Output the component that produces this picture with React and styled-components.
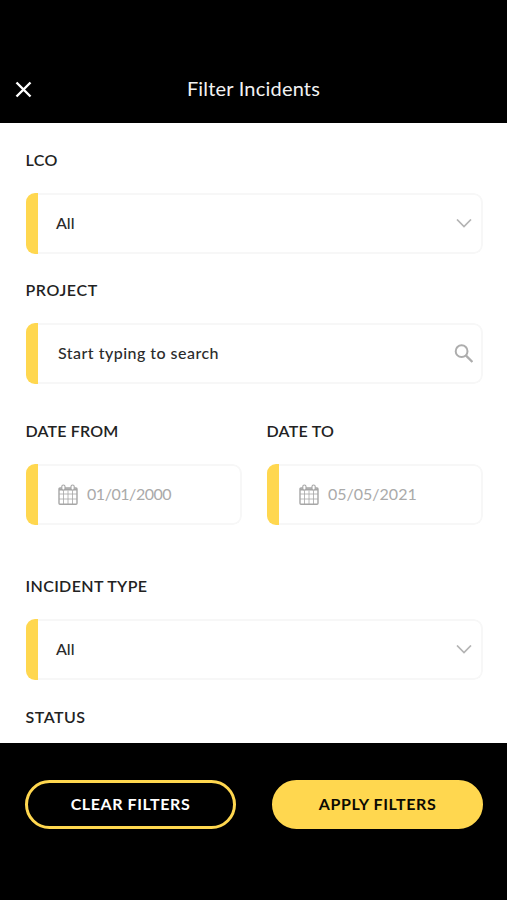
import React from "react"
import styled, { createGlobalStyle } from "styled-components"

const GlobalStyle = createGlobalStyle`
  * {
    box-sizing: border-box;
  }
  body {
    margin: 0;
    background: #000;
    font-family: Lato, "Liberation Sans", sans-serif;
  }
  button {
    font-family: inherit;
    cursor: pointer;
  }
`

const Screen = styled.div`
  display: flex;
  flex-direction: column;
  height: 900px;
  overflow: hidden;
  background: #000;
`

const Header = styled.header`
  display: grid;
  grid-template-columns: 48px 1fr 48px;
  align-items: center;
  height: 123px;
  padding-top: 53px;
  flex-shrink: 0;
  color: #fff;
`

const CloseButton = styled.button`
  display: flex;
  padding: 2px 0 0 15px;
  border: 0;
  background: none;
  color: #fff;
`

const Title = styled.h1`
  margin: 0;
  text-align: center;
  font-size: 20px;
  font-weight: 400;
  line-height: 24px;
  letter-spacing: 0.2px;
  color: #f2f2f2;
`

const Content = styled.main`
  flex: 1;
  min-height: 0;
  overflow: hidden;
  padding: 27px 24.5px 0 25.5px;
  background: #fff;
`

const Field = styled.div`
  margin-bottom: ${props => props.$gap || 0}px;
`

const Label = styled.label`
  display: block;
  height: 20px;
  margin-bottom: 23px;
  font-size: 16px;
  font-weight: 600;
  line-height: 20px;
  letter-spacing: ${props => props.$tracking || 0}px;
  white-space: nowrap;
  color: #222;
`

const Control = styled.div`
  display: flex;
  height: 61px;
  overflow: hidden;
  border-radius: 9px;
  background: #fff;
`

const Accent = styled.span`
  width: 12.5px;
  flex-shrink: 0;
  background: #ffd74f;
`

const ControlBody = styled.div`
  display: flex;
  flex: 1;
  align-items: center;
  padding-right: 8px;
  border: 2px solid #f7f7f7;
  border-left: 0;
  border-radius: 0 9px 9px 0;
`

const Value = styled.span`
  flex: 1;
  padding: 0 0 2px ${props => props.$indent}px;
  font-size: 16px;
  font-weight: 500;
  line-height: 20px;
  letter-spacing: ${props => props.$tracking || 0}px;
  color: #2b2b2b;
`

const DateValue = styled(Value)`
  font-weight: 400;
  color: #aaa;
`

const DateIcon = styled.span`
  display: flex;
  margin: 0 0 1px 20px;
`

const DateRow = styled.div`
  display: grid;
  grid-template-columns: 1fr 1fr;
  gap: 25px;
  margin-bottom: 51px;
`

const Footer = styled.footer`
  display: flex;
  justify-content: space-between;
  height: 157px;
  padding: 37px 24px 0 25px;
  flex-shrink: 0;
`

const Button = styled.button`
  width: 211px;
  height: 49px;
  padding: 0 0 2px;
  border: 3px solid #ffd74f;
  border-radius: 25px;
  background: ${props => (props.$primary ? "#ffd74f" : "transparent")};
  color: ${props => (props.$primary ? "#0c0a03" : "#fff")};
  font-size: 16px;
  font-weight: 700;
  line-height: 20px;
  letter-spacing: 0.6px;
`

function CloseIcon() {
  return (
    <svg width="17" height="17" viewBox="0 0 17 17" fill="none">
      <path d="M1.5 1.5 15.5 15.5M15.5 1.5 1.5 15.5" stroke="#fff" strokeWidth="2.4" />
    </svg>
  )
}

function ChevronIcon() {
  return (
    <svg width="17" height="10" viewBox="0 0 17 10" fill="none">
      <path d="M1 0.5 8 7.6 15 0.5" stroke="#b4b4b4" strokeWidth="1.7" />
    </svg>
  )
}

function SearchIcon() {
  return (
    <svg width="19" height="19" viewBox="0 0 19 19" fill="none" stroke="#adadad">
      <circle cx="7.6" cy="7.2" r="5.9" strokeWidth="2" />
      <path d="M11.8 11.4 18.4 18" strokeWidth="2.3" />
    </svg>
  )
}

function CalendarIcon() {
  return (
    <svg width="20" height="21" viewBox="0 0 20 21" fill="none" stroke="#a6a6a6">
      <rect x="1" y="4" width="18" height="16.2" rx="1" strokeWidth="1.4" />
      <path d="M1 5.4H19" strokeWidth="2" />
      <path d="M1 10H19M1 15H19M5.5 6.5V20M10 6.5V20M14.5 6.5V20" strokeWidth="0.8" />
      <rect x="3.8" y="1" width="3.2" height="5" rx="1.6" fill="#fff" strokeWidth="1.1" />
      <rect x="13" y="1" width="3.2" height="5" rx="1.6" fill="#fff" strokeWidth="1.1" />
    </svg>
  )
}

function SelectField({ label, tracking, value, gap }) {
  return (
    <Field $gap={gap}>
      <Label $tracking={tracking}>{label}</Label>
      <Control>
        <Accent />
        <ControlBody>
          <Value $indent={18}>{value}</Value>
          <ChevronIcon />
        </ControlBody>
      </Control>
    </Field>
  )
}

function DateField({ label, tracking, value, valueTracking }) {
  return (
    <Field>
      <Label $tracking={tracking}>{label}</Label>
      <Control>
        <Accent />
        <ControlBody>
          <DateIcon>
            <CalendarIcon />
          </DateIcon>
          <DateValue $indent={9} $tracking={valueTracking}>
            {value}
          </DateValue>
        </ControlBody>
      </Control>
    </Field>
  )
}

export default function App() {
  return (
    <>
      <GlobalStyle />
      <Screen>
        <Header>
          <CloseButton aria-label="Close">
            <CloseIcon />
          </CloseButton>
          <Title>Filter Incidents</Title>
        </Header>
        <Content>
          <SelectField label="LCO" tracking={0.4} value="All" gap={26} />
          <Field $gap={37}>
            <Label $tracking={0.6}>PROJECT</Label>
            <Control>
              <Accent />
              <ControlBody>
                <Value $indent={20} $tracking={0.47}>
                  Start typing to search
                </Value>
                <SearchIcon />
              </ControlBody>
            </Control>
          </Field>
          <DateRow>
            <DateField
              label="DATE FROM"
              tracking={0.18}
              value="01/01/2000"
              valueTracking={-0.45}
            />
            <DateField label="DATE TO" tracking={0.25} value="05/05/2021" />
          </DateRow>
          <SelectField
            label="INCIDENT TYPE"
            tracking={0.37}
            value="All"
            gap={27}
          />
          <Label $tracking={0.5}>STATUS</Label>
        </Content>
        <Footer>
          <Button>CLEAR FILTERS</Button>
          <Button $primary>APPLY FILTERS</Button>
        </Footer>
      </Screen>
    </>
  )
}
